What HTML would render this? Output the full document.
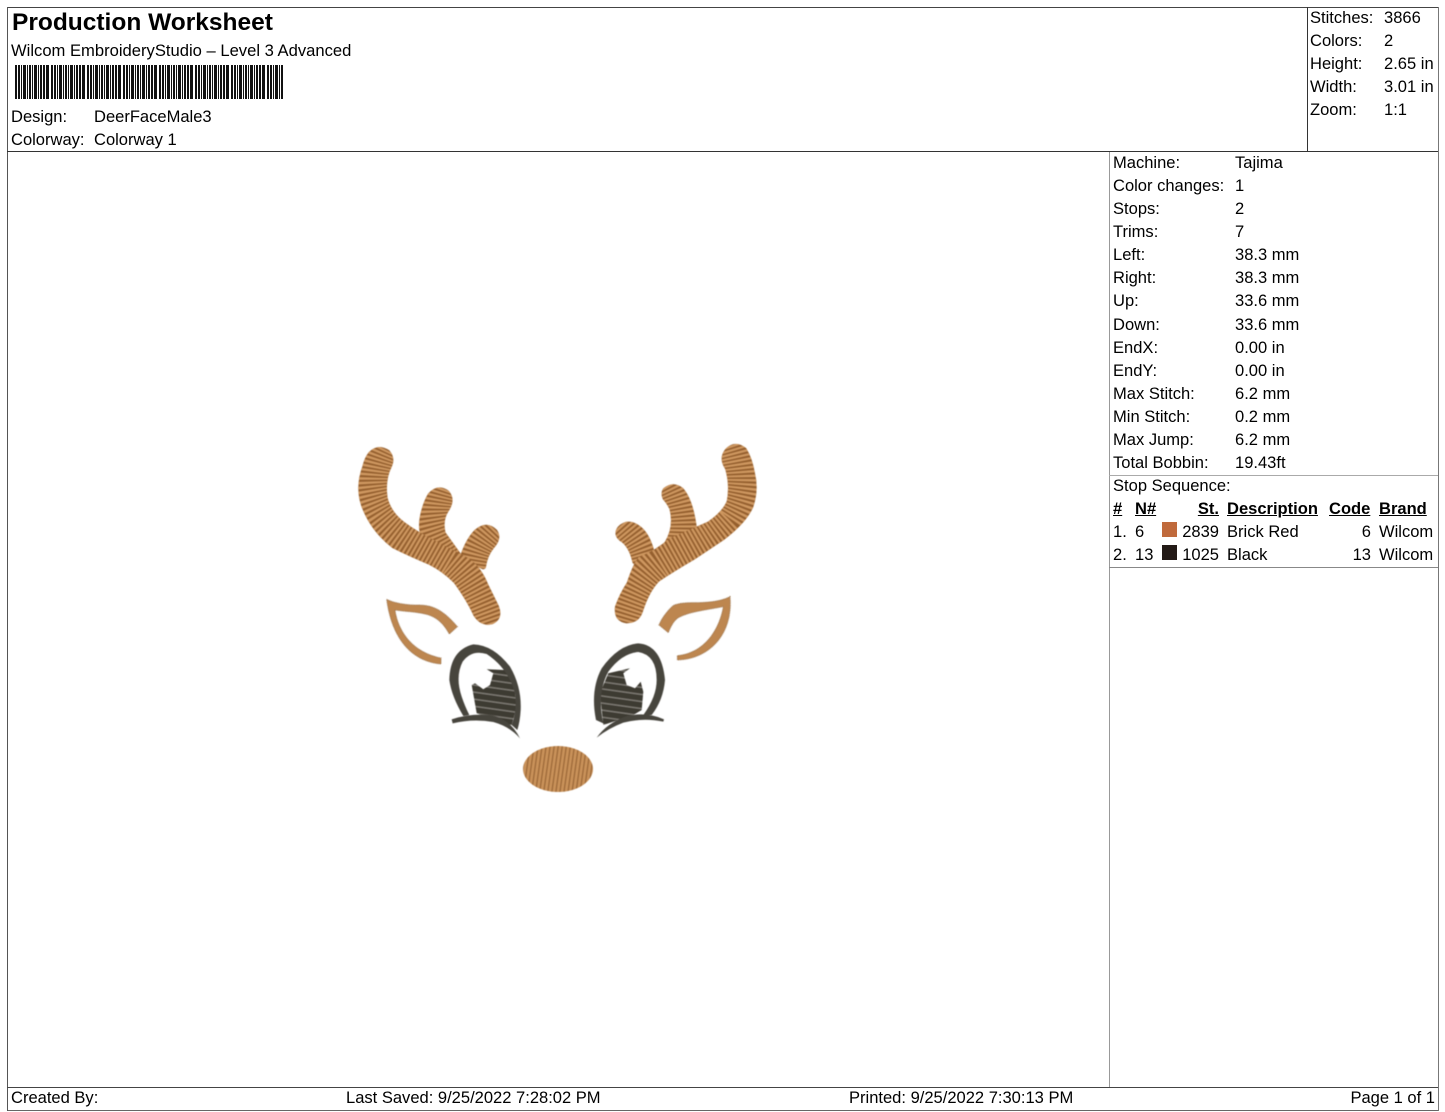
<!DOCTYPE html>
<html><head><meta charset="utf-8"><title>Production Worksheet</title>
<style>
html,body{margin:0;padding:0;background:#fff}
body{width:1445px;height:1112px;position:relative;overflow:hidden;font-family:"Liberation Sans",sans-serif;color:#000}
.t{position:absolute;white-space:nowrap;font-size:16.55px;line-height:20px;height:20px}
.r{text-align:right}
.u{font-weight:bold;text-decoration:underline}
.l{position:absolute;background:#444}
</style></head><body>
<div class="l" style="left:7px;top:7px;width:1431px;height:1px"></div>
<div class="l" style="left:7px;top:1110px;width:1431px;height:1px;background:#666"></div>
<div class="l" style="left:7px;top:7px;width:1px;height:1104px;background:#555"></div>
<div class="l" style="left:1438px;top:7px;width:1px;height:1104px;background:#777"></div>
<div class="l" style="left:7px;top:151px;width:1431px;height:1px;background:#333"></div>
<div class="l" style="left:1307px;top:7px;width:1px;height:145px;background:#333"></div>
<div class="l" style="left:1109px;top:152px;width:1px;height:935px;background:#999"></div>
<div class="l" style="left:1109px;top:475px;width:329px;height:1px;background:#aaa"></div>
<div class="l" style="left:1109px;top:567px;width:329px;height:1px;background:#888"></div>
<div class="l" style="left:7px;top:1087px;width:1431px;height:1px;background:#444"></div>

<div class="t" style="left:12px;top:8px;height:30px;line-height:30px;font-size:24.5px;font-weight:bold">Production Worksheet</div>
<div class="t" style="left:11px;top:41px;font-size:16.6px">Wilcom EmbroideryStudio – Level 3 Advanced</div>
<div class="t" style="left:11px;top:107px">Design:</div><div class="t" style="left:94px;top:107px">DeerFaceMale3</div>
<div class="t" style="left:11px;top:130px">Colorway:</div><div class="t" style="left:94px;top:130px">Colorway 1</div>

<svg style="position:absolute;left:15px;top:65px" width="270" height="34">
<defs><pattern id="bc" width="36" height="34" patternUnits="userSpaceOnUse">
<path fill="#111" d="M0 0h2v34H0zM3 0h2v34H3zM6 0h1v34H6zM8 0h3v34H8zM12 0h1v34h-1zM14 0h2v34h-2zM17 0h1v34h-1zM19 0h3v34h-3zM23 0h1v34h-1zM25 0h2v34h-2zM28 0h2v34h-2zM31 0h3v34h-3z"/>
</pattern></defs>
<rect width="269" height="34" fill="url(#bc)"/>
</svg>

<div class="t" style="left:1310px;top:8px">Stitches:</div><div class="t" style="left:1384px;top:8px">3866</div>
<div class="t" style="left:1310px;top:31px">Colors:</div><div class="t" style="left:1384px;top:31px">2</div>
<div class="t" style="left:1310px;top:54px">Height:</div><div class="t" style="left:1384px;top:54px">2.65 in</div>
<div class="t" style="left:1310px;top:77px">Width:</div><div class="t" style="left:1384px;top:77px">3.01 in</div>
<div class="t" style="left:1310px;top:100px">Zoom:</div><div class="t" style="left:1384px;top:100px">1:1</div>

<div class="t" style="left:1113px;top:153px">Machine:</div><div class="t" style="left:1235px;top:153px">Tajima</div>
<div class="t" style="left:1113px;top:176px">Color changes:</div><div class="t" style="left:1235px;top:176px">1</div>
<div class="t" style="left:1113px;top:199px">Stops:</div><div class="t" style="left:1235px;top:199px">2</div>
<div class="t" style="left:1113px;top:222px">Trims:</div><div class="t" style="left:1235px;top:222px">7</div>
<div class="t" style="left:1113px;top:245px">Left:</div><div class="t" style="left:1235px;top:245px">38.3 mm</div>
<div class="t" style="left:1113px;top:268px">Right:</div><div class="t" style="left:1235px;top:268px">38.3 mm</div>
<div class="t" style="left:1113px;top:291px">Up:</div><div class="t" style="left:1235px;top:291px">33.6 mm</div>
<div class="t" style="left:1113px;top:315px">Down:</div><div class="t" style="left:1235px;top:315px">33.6 mm</div>
<div class="t" style="left:1113px;top:338px">EndX:</div><div class="t" style="left:1235px;top:338px">0.00 in</div>
<div class="t" style="left:1113px;top:361px">EndY:</div><div class="t" style="left:1235px;top:361px">0.00 in</div>
<div class="t" style="left:1113px;top:384px">Max Stitch:</div><div class="t" style="left:1235px;top:384px">6.2 mm</div>
<div class="t" style="left:1113px;top:407px">Min Stitch:</div><div class="t" style="left:1235px;top:407px">0.2 mm</div>
<div class="t" style="left:1113px;top:430px">Max Jump:</div><div class="t" style="left:1235px;top:430px">6.2 mm</div>
<div class="t" style="left:1113px;top:453px">Total Bobbin:</div><div class="t" style="left:1235px;top:453px">19.43ft</div>
<div class="t" style="left:1113px;top:476px">Stop Sequence:</div>

<div class="t u" style="left:1113px;top:499px">#</div>
<div class="t u" style="left:1135px;top:499px">N#</div>
<div class="t u r" style="left:1170px;width:49px;top:499px">St.</div>
<div class="t u" style="left:1227px;top:499px">Description</div>
<div class="t u" style="left:1329px;top:499px">Code</div>
<div class="t u" style="left:1379px;top:499px">Brand</div>

<div class="t" style="left:1113px;top:522px">1.</div><div class="t" style="left:1135px;top:522px">6</div>
<div style="position:absolute;left:1162px;top:522px;width:15px;height:15px;background:#c06a3c"></div>
<div class="t r" style="left:1170px;width:49px;top:522px">2839</div>
<div class="t" style="left:1227px;top:522px">Brick Red</div>
<div class="t r" style="left:1320px;width:51px;top:522px">6</div>
<div class="t" style="left:1379px;top:522px">Wilcom</div>

<div class="t" style="left:1113px;top:545px">2.</div><div class="t" style="left:1135px;top:545px">13</div>
<div style="position:absolute;left:1162px;top:545px;width:15px;height:15px;background:#231a16"></div>
<div class="t r" style="left:1170px;width:49px;top:545px">1025</div>
<div class="t" style="left:1227px;top:545px">Black</div>
<div class="t r" style="left:1320px;width:51px;top:545px">13</div>
<div class="t" style="left:1379px;top:545px">Wilcom</div>

<div class="t" style="left:11px;top:1088px">Created By:</div>
<div class="t" style="left:346px;top:1088px">Last Saved: 9/25/2022 7:28:02 PM</div>
<div class="t" style="left:849px;top:1088px">Printed: 9/25/2022 7:30:13 PM</div>
<div class="t r" style="right:10px;top:1088px">Page 1 of 1</div>

<svg style="position:absolute;left:0;top:0" width="1445" height="1112" fill="none">
<defs>
<filter id="soft" x="0" y="0" width="1445" height="1112" filterUnits="userSpaceOnUse"><feGaussianBlur stdDeviation=".4"/></filter>
<pattern id="nose" width="4" height="7" patternUnits="userSpaceOnUse" patternTransform="rotate(8)">
<rect width="4" height="7" fill="#c9925a"/><rect width="1.3" height="7" fill="#9a6636"/>
</pattern>
<pattern id="pup" width="8" height="7" patternUnits="userSpaceOnUse" patternTransform="rotate(8)">
<rect width="8" height="7" fill="#3d3a32"/><rect y="5.8" width="8" height="1.2" fill="#84817a"/>
</pattern>
<path id="lm" stroke-linejoin="round" d="M90 70Q115 45 145 65Q162 85 150 110Q130 150 138 205Q150 250 190 280Q230 310 290 340Q340 365 385 390Q420 415 440 465L472 530Q485 565 455 578Q425 585 405 555Q385 510 345 455Q310 420 270 400Q210 375 160 350Q95 300 68 225Q50 170 72 110Q78 85 90 70Z"/>
<path id="lb1" stroke-linejoin="round" d="M270 195Q295 168 322 188Q340 210 320 240Q300 270 310 310L360 380L250 320Q238 290 250 245Q258 215 270 195Z"/>
<path id="lb2" stroke-linejoin="round" d="M410 305Q440 280 465 305Q478 325 455 350Q435 375 430 410L368 380Q385 330 410 305Z"/>
<path id="rm" stroke-linejoin="round" d="M500 60Q525 35 555 58Q572 85 580 130Q592 180 575 230Q555 275 490 325Q445 355 400 385Q340 420 295 450Q265 480 245 540Q235 575 200 575Q165 570 170 530Q185 490 205 460Q225 400 240 385Q290 365 330 330Q400 300 445 280Q490 250 505 215Q515 165 500 115Q480 85 500 60Z"/>
<path id="rb1" stroke-linejoin="round" d="M315 180Q340 160 365 180Q395 215 405 305L320 340Q350 290 335 235Q325 215 315 205Q308 190 315 180Z"/>
<path id="rb2" stroke-linejoin="round" d="M180 295Q205 270 240 298Q265 320 278 375L225 395Q215 350 190 330Q165 315 180 295Z"/>
<mask id="ma1" maskUnits="userSpaceOnUse" x="0" y="0" width="800" height="800"><use href="#lm" fill="#fff" stroke="#fff" stroke-width="10"/></mask>
<mask id="ma2" maskUnits="userSpaceOnUse" x="0" y="0" width="800" height="800"><use href="#lb1" fill="#fff" stroke="#fff" stroke-width="14"/></mask>
<mask id="ma3" maskUnits="userSpaceOnUse" x="0" y="0" width="800" height="800"><use href="#lb2" fill="#fff" stroke="#fff" stroke-width="16"/></mask>
<mask id="mb1" maskUnits="userSpaceOnUse" x="0" y="0" width="800" height="800"><use href="#rm" fill="#fff" stroke="#fff" stroke-width="10"/></mask>
<mask id="mb2" maskUnits="userSpaceOnUse" x="0" y="0" width="800" height="800"><use href="#rb1" fill="#fff" stroke="#fff" stroke-width="14"/></mask>
<mask id="mb3" maskUnits="userSpaceOnUse" x="0" y="0" width="800" height="800"><use href="#rb2" fill="#fff" stroke="#fff" stroke-width="16"/></mask>
</defs>

<g filter="url(#soft)">
<!-- left antler, coordinates in 3x crop space -->
<g transform="translate(340 430) scale(.33333)">
<use href="#lb1" fill="#96602f" stroke="#96602f" stroke-width="14"/><use href="#lb2" fill="#96602f" stroke="#96602f" stroke-width="16"/>
<g mask="url(#ma2)"><path stroke="#cf9860" stroke-width="110" stroke-dasharray="6 6" d="M300 160C270 230 275 300 340 380"/></g>
<g mask="url(#ma3)"><path stroke="#cf9860" stroke-width="110" stroke-dasharray="6 6" d="M455 290C405 340 400 370 395 420"/></g>
<use href="#lm" fill="#96602f" stroke="#96602f" stroke-width="10"/>
<g mask="url(#ma1)"><path stroke="#cf9860" stroke-width="130" stroke-dasharray="6 6" d="M125 40C85 110 85 190 125 250C170 315 250 345 330 395C390 440 420 510 450 600"/></g>
</g>

<!-- right antler -->
<g transform="translate(560 430) scale(.33333)">
<use href="#rb1" fill="#96602f" stroke="#96602f" stroke-width="14"/><use href="#rb2" fill="#96602f" stroke="#96602f" stroke-width="16"/>
<g mask="url(#mb2)"><path stroke="#cf9860" stroke-width="110" stroke-dasharray="6 6" d="M335 160C370 220 370 280 365 340"/></g>
<g mask="url(#mb3)"><path stroke="#cf9860" stroke-width="110" stroke-dasharray="6 6" d="M190 280C235 330 245 350 255 400"/></g>
<use href="#rm" fill="#96602f" stroke="#96602f" stroke-width="10"/>
<g mask="url(#mb1)"><path stroke="#cf9860" stroke-width="130" stroke-dasharray="6 6" d="M525 30C555 110 560 200 510 270C450 330 370 360 300 405C240 450 220 510 195 600"/></g>
</g>

<!-- ears -->
<g transform="translate(340 430) scale(.33333)">
<path fill="#bd8650" stroke="#7d5228" stroke-width="3" stroke-dasharray="2 3" d="M140 508C165 520 200 525 230 525C265 525 300 528 352 590L328 612C310 580 290 560 255 552C225 545 195 545 165 540C172 590 205 664 303 684L303 702C215 695 155 625 140 508Z"/>
</g>
<g transform="translate(560 430) scale(.33333)">
<path fill="#bd8650" stroke="#7d5228" stroke-width="3" stroke-dasharray="2 3" d="M510 500C480 515 440 518 400 518C375 518 350 520 338 528C320 545 305 565 297 585L325 608C332 590 340 575 352 565C385 545 440 540 490 530C480 590 440 668 352 677L352 690C445 688 520 615 510 500Z"/>
</g>

<!-- eyes -->
<g transform="translate(430 630) scale(.33333)">
<path fill="url(#pup)" transform="scale(3)" d="M56.7 39.3L75 40L83.3 50L86.7 76.7L81.7 95L63.3 90L46.7 83.3L41.7 55L45 53.3L53.3 59.3L60 55L63.3 43.3Z"/>
<path fill="url(#pup)" transform="scale(3)" d="M178.3 43.3L200 38.3L193.3 43.3L196.7 55L205 58.3L210.7 51.7L213.3 61.7L211.7 80L203.3 85L173.3 95L170 63.3Z"/>
<path fill="#47453c" d="M100 258Q65 200 58 150Q60 60 130 43Q190 45 240 110Q275 170 272 240Q270 275 262 300L245 285Q262 240 255 190Q235 115 170 72Q125 58 98 95Q75 140 95 200Q105 230 118 255Z"/>
<path fill="#47453c" d="M65 268Q120 250 180 255Q240 265 270 325Q240 290 190 276Q130 265 68 280Z"/>
<path fill="#47453c" d="M498 270Q480 180 515 115Q565 45 625 40Q695 45 705 150Q700 210 665 255L640 255Q680 200 680 150Q680 75 625 66Q575 70 535 125Q500 190 520 280Z"/>
<path fill="#47453c" d="M500 323Q530 280 590 258Q650 245 702 268L700 275Q640 262 580 278Q535 295 500 323Z"/>
</g>

<!-- nose -->
<ellipse cx="558" cy="769" rx="35" ry="23" fill="url(#nose)"/>
</g>
</svg>
</body></html>
